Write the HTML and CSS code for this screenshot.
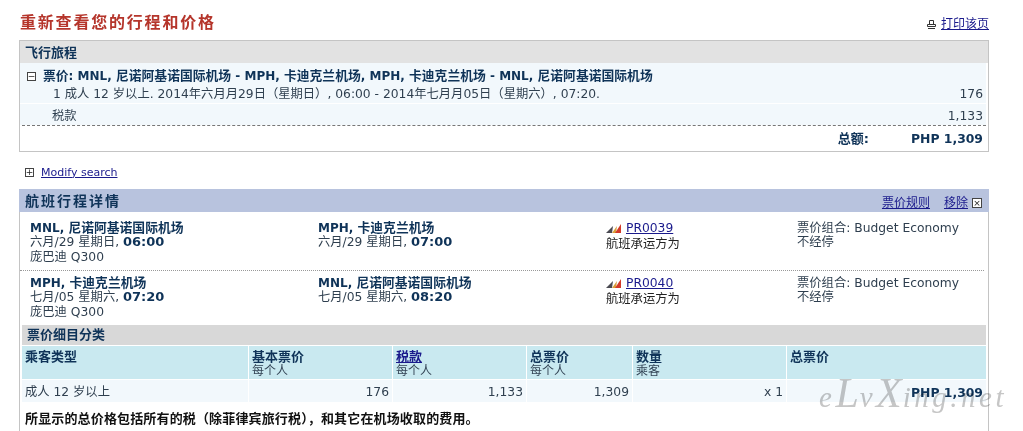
FILE: index.html
```html
<!DOCTYPE html>
<html lang="zh">
<head>
<meta charset="utf-8">
<title>重新查看您的行程和价格</title>
<link rel="stylesheet" href="styles.css">
</head>
<body>
<div class="page">
  <div class="top">
    <h1>重新查看您的行程和价格</h1>
    <div class="print">
      <svg class="ico-print" width="9" height="9" viewBox="0 0 9 9"><path d="M2.5.5h4v4h-4zM.5 4.5h8v2h-8zM1 8.5h7" fill="none" stroke="#333"/></svg>
      <a href="#">打印该页</a>
    </div>
  </div>

  <section class="summary">
    <div class="sum-head">飞行旅程</div>
    <div class="sum-body">
      <div class="sum-title"><span class="box-ico">−</span><b><span class="z">票价</span>: MNL, <span class="z">尼诺阿基诺国际机场</span> - MPH, <span class="z">卡迪克兰机场</span>, MPH, <span class="z">卡迪克兰机场</span> - MNL, <span class="z">尼诺阿基诺国际机场</span></b></div>
      <div class="sum-row first"><span>1 成人 12 岁以上. 2014年六月月29日（星期日）, 06:00 - 2014年七月月05日（星期六）, 07:20.</span><span>176</span></div>
      <div class="sum-row tax"><span>税款</span><span>1,133</span></div>
    </div>
    <div class="sum-total"><b class="tlabel">总额:</b><b class="tval">PHP 1,309</b></div>
  </section>

  <div class="modify"><span class="box-ico">+</span><a href="#">Modify search</a></div>

  <section class="details">
    <div class="det-head">
      <h2>航班行程详情</h2>
      <div class="det-links"><a href="#">票价规则</a><a href="#" class="rm">移除</a><span class="box-ico x">×</span></div>
    </div>
    <div class="flight">
      <div><b>MNL, <span class="z">尼诺阿基诺国际机场</span></b><br>六月/29 星期日, <b class="time">06:00</b><br><span class="plane">庞巴迪 Q300</span></div>
      <div><b>MPH, <span class="z">卡迪克兰机场</span></b><br>六月/29 星期日, <b class="time">07:00</b></div>
      <div><svg class="logo" width="15" height="9" viewBox="0 0 15 9"><path d="M0 9 7 2 6 9z" fill="#4a4a52"/><path d="M6 9 11 2 10 9z" fill="#d9a03a"/><path d="M9 9 15 0v9z" fill="#d43a2a"/></svg><a href="#">PR0039</a><br><span class="car">航班承运方为</span></div>
      <div>票价组合: Budget Economy<br>不经停</div>
    </div>
    <div class="flight second">
      <div><b>MPH, <span class="z">卡迪克兰机场</span></b><br>七月/05 星期六, <b class="time">07:20</b><br><span class="plane">庞巴迪 Q300</span></div>
      <div><b>MNL, <span class="z">尼诺阿基诺国际机场</span></b><br>七月/05 星期六, <b class="time">08:20</b></div>
      <div><svg class="logo" width="15" height="9" viewBox="0 0 15 9"><path d="M0 9 7 2 6 9z" fill="#4a4a52"/><path d="M6 9 11 2 10 9z" fill="#d9a03a"/><path d="M9 9 15 0v9z" fill="#d43a2a"/></svg><a href="#">PR0040</a><br><span class="car">航班承运方为</span></div>
      <div>票价组合: Budget Economy<br>不经停</div>
    </div>

    <div class="fare">
      <div class="fare-title">票价细目分类</div>
      <div class="fare-grid">
        <div class="th"><b>乘客类型</b></div>
        <div class="th"><b>基本票价</b><br>每个人</div>
        <div class="th"><a href="#"><b class="lnk">税款</b></a><br>每个人</div>
        <div class="th"><b>总票价</b><br>每个人</div>
        <div class="th"><b>数量</b><br>乘客</div>
        <div class="th last"><b>总票价</b></div>
        <div class="td">成人 12 岁以上</div>
        <div class="td num">176</div>
        <div class="td num">1,133</div>
        <div class="td num">1,309</div>
        <div class="td num">x 1</div>
        <div class="td num last"><b class="tval">PHP 1,309</b></div>
      </div>
      <p class="note">所显示的总价格包括所有的税（除菲律宾旅行税），和其它在机场收取的费用。</p>
    </div>
  </section>
  <div class="mark">e<span class="cap">L</span>v<span class="cap">X</span>ing.net</div>
</div>
</body>
</html>
```
FILE: styles.css
```css
* { box-sizing: border-box; }
html, body { margin: 0; height: 431px; overflow: hidden; background: #fff; }
body {
  font-family: "DejaVu Sans", "Noto Sans CJK SC", sans-serif;
  font-size: 12.3px;
  line-height: 15px;
  color: #2f3f4f;
}
b { color: #0f3358; font-size: 12px; }
.z { font-size: 12.8px; }
b.time { font-size: 13px; }
a { color: #1a1a8c; text-decoration: underline; }
.page { position: relative; width: 1023px; height: 431px; padding: 10px 34px 0 19px; }

.top { display: flex; justify-content: space-between; align-items: flex-start; height: 30px; }
h1 { margin: 0 0 0 1px; font: bold 16px/23px "Noto Sans CJK SC", sans-serif; letter-spacing: 1.8px; color: #b5352b; }
.print { display: flex; align-items: center; gap: 5px; padding-top: 7px; font-size: 12px; }
.ico-print { display: block; }

.box-ico {
  display: inline-flex; align-items: center; justify-content: center; flex: none;
  width: 9px; height: 9px; border: 1px solid #444; background: #fff;
  font: 9px/1 "DejaVu Sans", sans-serif; color: #222;
}

.summary { border: 1px solid #c4c4c4; height: 112px; }
.sum-head { height: 22px; background: #e2e2e2; padding-left: 5px; font-weight: bold; font-size: 13px; line-height: 23px; color: #0f3358; }
.sum-body { background: #f2f8fc; margin-right: 2px; height: 62px; }
.sum-title { display: flex; align-items: center; gap: 7px; height: 23px; padding: 3px 0 0 7px; }
.sum-row { display: flex; justify-content: space-between; padding: 0 3px 0 33px; }
.sum-row.first { height: 18px; border-bottom: 1px solid #fff; padding-top: 1px; }
.sum-row.tax { height: 21px; line-height: 24px; padding-left: 32px; }
.sum-total { display: flex; justify-content: flex-end; align-items: center; height: 26px; margin: 0 2px; border-top: 1px dashed #777; padding-right: 3px; }
b.tlabel { font-size: 13px; margin-right: 42px; }
b.tval { font-size: 12.4px; }

.modify { display: flex; align-items: center; gap: 7px; height: 37px; padding: 3px 0 0 6px; }
.modify a { font-size: 11px; }

.details { border-right: 1px solid #c4c4c4; border-left: 1px solid #c4c4c4; height: 245px; }
.det-head { display: flex; justify-content: space-between; align-items: center; height: 23px; background: #b8c3de; margin: 0 -1px; padding: 0 7px 0 6px; }
h2 { margin: 0; font: bold 14px/23px "Noto Sans CJK SC", sans-serif; letter-spacing: 2px; color: #0f3358; }
.det-links { display: flex; align-items: center; gap: 4px; padding-top: 5px; font-size: 12px; }
.det-links .rm { margin-left: 10px; }
.box-ico.x { width: 10px; height: 10px; }

.flight { display: grid; grid-template-columns: 288px 288px 191px 1fr; height: 58px; padding: 9px 0 0 10px; line-height: 14px; margin-right: 4px; }
.flight.second { height: 55px; padding-top: 5px; border-top: 1px dotted #999; }
.logo { vertical-align: -1px; margin-right: 5px; }
.plane { display: inline-block; margin-top: 1px; }
.car { display: inline-block; margin-top: 2px; color: #222; }

.fare { padding: 0 2px; }
.fare-title { height: 21px; background: #d8d8d8; background-clip: padding-box; font-weight: bold; font-size: 13px; color: #0f3358; padding-left: 5px; line-height: 20px; border-bottom: 1px solid #fff; }
.fare-grid { display: grid; grid-template-columns: 227px 144px 134px 106px 154px 199px; }
.th { height: 34px; background: #c9e9f0; background-clip: padding-box; border-right: 1px solid #fff; border-bottom: 1px solid #fff; padding: 4px 3px 0; line-height: 14px; font-size: 12px; color: #345; }
.th b { font-size: 13px; }
.th b.lnk { color: #1a1a8c; }
.td { height: 22px; background: #f2f8fc; background-clip: padding-box; border-right: 1px solid #fff; padding: 5px 3px 0; }
.th.last, .td.last { border-right: 0; }
.num { text-align: right; }
.note { margin: 0; padding: 9px 3px 0; font-weight: bold; color: #111; font-size: 13px; letter-spacing: .15px; }

.mark {
  position: absolute; left: 819px; top: 368px;
  font: italic 29px/50px "Liberation Serif", serif; letter-spacing: 3.5px;
  color: #c6c6c6; mix-blend-mode: multiply; pointer-events: none;
}
.mark .cap { font-size: 42px; letter-spacing: 1px; }
```
